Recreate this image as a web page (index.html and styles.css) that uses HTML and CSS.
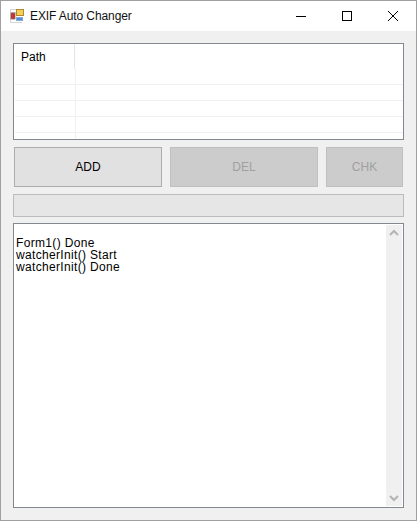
FILE: index.html
```html
<!DOCTYPE html>
<html lang="en">
<head>
  <meta charset="UTF-8" />
  <title>EXIF Auto Changer</title>
  <link rel="stylesheet" href="styles.css">
</head>
<body>
  <div class="window">
    <div class="titlebar">
      <svg class="app-icon" width="16" height="16" viewBox="0 0 16 16">
        <path d="M1.5 1.5H13M1.5 1.5V14.5H13" fill="none" stroke="#d4d4d4"/>
        <path d="M1 4.5H7" stroke="#d4d4d4"/>
        <rect x="7.5" y="1.5" width="7" height="6" fill="#f6cf5a" stroke="#b48a28"/>
        <rect x="2" y="5" width="4" height="6" fill="#c8322b" stroke="#8f6464" stroke-width="0.8"/>
        <rect x="7.5" y="9.5" width="6" height="3" fill="#4f8fe0" stroke="#86a9d6"/>
      </svg>
      <span class="title">EXIF Auto Changer</span>
      <div class="controls">
        <div class="ctl">
          <svg width="10" height="10" viewBox="0 0 10 10"><path d="M0 5.5H10" stroke="#000"/></svg>
        </div>
        <div class="ctl">
          <svg width="10" height="10" viewBox="0 0 10 10"><rect x="0.5" y="0.5" width="9" height="9" fill="none" stroke="#000"/></svg>
        </div>
        <div class="ctl">
          <svg width="10" height="10" viewBox="0 0 10 10"><path d="M0 0L10 10M10 0L0 10" stroke="#000" stroke-width="1"/></svg>
        </div>
      </div>
    </div>

    <div class="client">
      <div class="list">
        <div class="list-head"><div class="col-path">Path</div></div>
        <div class="list-row"></div>
        <div class="list-row"></div>
        <div class="list-row"></div>
        <div class="list-row"></div>
        <div class="list-row"></div>
      </div>

      <div class="buttons">
        <button class="btn add">ADD</button>
        <button class="btn del" disabled>DEL</button>
        <button class="btn chk" disabled>CHK</button>
      </div>

      <div class="progress"></div>

      <div class="log">
        <div class="log-text">
          <div>Form1() Done</div>
          <div>watcherInit() Start</div>
          <div>watcherInit() Done</div>
        </div>
        <div class="scrollbar">
          <svg width="16" height="17" viewBox="0 0 16 17"><path d="M4 10L8 6L12 10" fill="none" stroke="#b4b4b4" stroke-width="2"/></svg>
          <svg width="16" height="17" viewBox="0 0 16 17"><path d="M4 7L8 11L12 7" fill="none" stroke="#b4b4b4" stroke-width="2"/></svg>
        </div>
      </div>
    </div>
  </div>
</body>
</html>
```

FILE: styles.css
```css
* {
  box-sizing: border-box;
}
html, body {
  margin: 0;
  height: 100%;
}
body {
  font-family: 'Liberation Sans', sans-serif;
  font-size: 12px;
  color: #000;
  background: #f0f0f0;
}
.window {
  width: 417px;
  height: 521px;
  border: 1px solid #a0a0a0;
  display: flex;
  flex-direction: column;
  overflow: hidden;
}
.titlebar {
  height: 30px;
  background: #fff;
  display: flex;
  align-items: center;
  padding-left: 8px;
  flex-shrink: 0;
}
.app-icon {
  margin-right: 5px;
}
.title {
  flex: 1;
  color: #111;
  letter-spacing: -0.1px;
}
.controls {
  display: flex;
}
.ctl {
  width: 46px;
  height: 30px;
  display: flex;
  align-items: center;
  justify-content: center;
}
.client {
  flex: 1;
  padding: 12px;
  display: flex;
  flex-direction: column;
}
.list {
  height: 97px;
  background: #fff;
  border: 1px solid #828790;
  overflow: hidden;
  flex-shrink: 0;
}
.list-head {
  height: 25px;
}
.col-path {
  width: 61px;
  height: 25px;
  padding: 6px 0 0 7px;
  border-right: 1px solid #e5e5e5;
}
.list-row {
  height: 16px;
  margin-left: 1px;
  border-bottom: 1px solid #f0f0f0;
  background: linear-gradient(#f0f0f0, #f0f0f0) 60px 0 / 1px 100% no-repeat;
}
.buttons {
  display: flex;
  gap: 8px;
  margin: 7px 0 0 1px;
  padding-right: 1px;
  flex-shrink: 0;
}
.btn {
  height: 40px;
  border: 1px solid #adadad;
  background: #e1e1e1;
  font: inherit;
  color: #000;
  padding: 0;
}
.add, .del {
  width: 148px;
}
.chk {
  flex: 1;
}
.del, .chk {
  background: #cccccc;
  border-color: #bfbfbf;
  color: #a0a0a0;
}
.progress {
  height: 23px;
  margin-top: 7px;
  background: #e6e6e6;
  border: 1px solid #bcbcbc;
  flex-shrink: 0;
}
.log {
  height: 285px;
  margin-top: 6px;
  background: #fff;
  border: 1px solid #828790;
  display: flex;
  padding-right: 1px;
}
.log-text {
  flex: 1;
  padding: 13px 0 0 2px;
  line-height: 12px;
  letter-spacing: 0.33px;
}
.scrollbar {
  width: 16px;
  background: #f0f0f0;
  display: flex;
  flex-direction: column;
  justify-content: space-between;
  margin: 1px 0;
}
```
